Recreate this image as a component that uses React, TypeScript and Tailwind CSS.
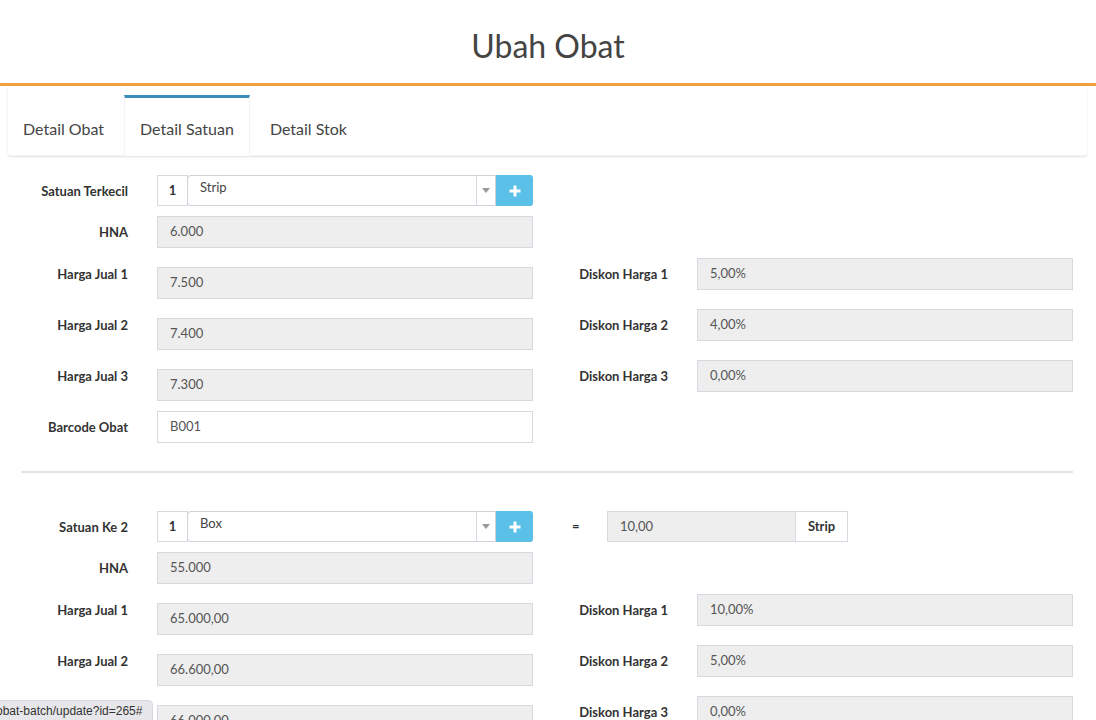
import React from 'react';

interface Baris {
  label: string;
  nilai: string;
  diskonLabel?: string;
  diskon?: string;
}

const fontUtama = "font-['Lato','Noto_Sans',sans-serif]";

function InputAbu({ nilai, lebar = 'w-[376px]' }: { nilai: string; lebar?: string }) {
  return (
    <div
      className={`${lebar} h-[32px] shrink-0 flex items-center pl-[12px] bg-[#eeeeee] border border-[#d6d9df] text-[13px] text-[#555]`}
    >
      {nilai}
    </div>
  );
}

function Label({ children, lebar = 'w-[128px]' }: { children: React.ReactNode; lebar?: string }) {
  return (
    <div className={`${lebar} h-[32px] shrink-0 flex items-center justify-end pt-[1px] text-[13px] font-bold text-[#333]`}>
      {children}
    </div>
  );
}

function GrupSatuan({ nama }: { nama: string }) {
  return (
    <div className="ml-[29px] w-[376px] h-[31px] flex shrink-0">
      <div className="w-[31px] h-full flex items-center justify-center border border-[#d6d9df] bg-white text-[13px] font-bold text-[#333]">
        1
      </div>
      <div className="flex-1 h-full flex border border-[#cfd2d8] rounded-l-[4px] bg-white -ml-px">
        <div className="flex-1 pl-[12px] pt-[2px] text-[13px] text-[#444]">{nama}</div>
        <div className="w-[19px] h-full border-l border-[#d6d9df] flex items-center justify-center">
          <svg width="8" height="5" viewBox="0 0 8 5">
            <path d="M0 0 L8 0 L4 5 Z" fill="#999" />
          </svg>
        </div>
      </div>
      <button className="w-[37px] h-full bg-[#5bc0e8] rounded-r-[3px] flex items-center justify-center">
        <svg width="12" height="12" viewBox="0 0 12 12">
          <path d="M6 0.5 V11.5 M0.5 6 H11.5" stroke="#fff" strokeWidth="3" />
        </svg>
      </button>
    </div>
  );
}

function BarisHarga({ baris }: { baris: Baris }) {
  return (
    <div className="flex h-[41px]">
      <div className="flex w-[533px] shrink-0">
        <Label>{baris.label}</Label>
        <div className="ml-[29px] mt-[9px]">
          <InputAbu nilai={baris.nilai} />
        </div>
      </div>
      {baris.diskonLabel && (
        <div className="flex">
          <Label lebar="w-[135px]">{baris.diskonLabel}</Label>
          <div className="ml-[29px]">
            <InputAbu nilai={baris.diskon || ''} />
          </div>
        </div>
      )}
    </div>
  );
}

function BagianSatuan({
  judul,
  nama,
  hna,
  harga,
  konversi,
  barcode,
}: {
  judul: string;
  nama: string;
  hna: string;
  harga: Baris[];
  konversi?: boolean;
  barcode?: string;
}) {
  return (
    <div className="flex flex-col gap-[10px]">
      <div className="flex h-[31px]">
        <div className="flex w-[533px] shrink-0">
          <div className="w-[128px] h-[31px] flex items-center justify-end pt-[2px] text-[13px] font-bold text-[#333]">
            {judul}
          </div>
          <GrupSatuan nama={nama} />
        </div>
        {konversi && (
          <div className="flex items-center">
            <span className="ml-[39px] w-[6px] text-[13px] font-bold text-[#333]">=</span>
            <div className="ml-[29px] flex h-[31px]">
              <div className="w-[189px] h-full flex items-center pl-[12px] bg-[#eeeeee] border border-[#d6d9df] text-[13px] text-[#555]">
                10,00
              </div>
              <div className="w-[52px] h-full flex justify-center pt-[5px] bg-white border border-l-0 border-[#d6d9df] text-[13px] font-bold text-[#333]">
                Strip
              </div>
            </div>
          </div>
        )}
      </div>
      <div className="flex">
        <Label>HNA</Label>
        <div className="ml-[29px]">
          <InputAbu nilai={hna} />
        </div>
      </div>
      {harga.map((b) => (
        <BarisHarga key={b.label} baris={b} />
      ))}
      {barcode && (
        <div className="flex">
          <Label>Barcode Obat</Label>
          <div className="ml-[29px] w-[376px] h-[32px] flex items-center pl-[12px] bg-white border border-[#d6d9df] text-[13px] text-[#555]">
            {barcode}
          </div>
        </div>
      )}
    </div>
  );
}

export default function App() {
  const tabs = ['Detail Obat', 'Detail Satuan', 'Detail Stok'];

  return (
    <div className={`min-h-screen bg-white ${fontUtama} relative`}>
      {/* judul halaman */}
      <div className="h-[83px] flex items-center justify-center pt-[8px]">
        <h1 className="text-[32px] text-[#444] font-normal">Ubah Obat</h1>
      </div>
      <div className="h-[3px] bg-[#eea03e]" />

      {/* tab */}
      <div className="ml-[8px] w-[1079px] h-[70px] bg-white rounded-b-[3px] shadow-[0_1px_2px_rgba(0,0,0,0.12)] flex items-end border-b border-[#f4f4f4]">
        {tabs.map((t) => {
          const aktif = t === 'Detail Satuan';
          return (
            <div
              key={t}
              className={`h-[61px] mr-[5px] px-[15px] pt-[3px] flex items-center border-t-[3px] text-[16px] text-[#444] -mb-px ${
                aktif ? 'border-t-[#3c8dbc] border-x border-x-[#f4f4f4] bg-white' : 'border-t-transparent'
              }`}
            >
              {t}
            </div>
          );
        })}
      </div>

      {/* isi form */}
      <div className="pt-[19px]">
        <BagianSatuan
          judul="Satuan Terkecil"
          nama="Strip"
          hna="6.000"
          barcode="B001"
          harga={[
            { label: 'Harga Jual 1', nilai: '7.500', diskonLabel: 'Diskon Harga 1', diskon: '5,00%' },
            { label: 'Harga Jual 2', nilai: '7.400', diskonLabel: 'Diskon Harga 2', diskon: '4,00%' },
            { label: 'Harga Jual 3', nilai: '7.300', diskonLabel: 'Diskon Harga 3', diskon: '0,00%' },
          ]}
        />

        <div className="ml-[21px] w-[1052px] mt-[28px] mb-[38px] border-t-2 border-[#e3e3e3]" />

        <BagianSatuan
          judul="Satuan Ke 2"
          nama="Box"
          hna="55.000"
          konversi
          harga={[
            { label: 'Harga Jual 1', nilai: '65.000,00', diskonLabel: 'Diskon Harga 1', diskon: '10,00%' },
            { label: 'Harga Jual 2', nilai: '66.600,00', diskonLabel: 'Diskon Harga 2', diskon: '5,00%' },
            { label: 'Harga Jual 3', nilai: '66.000,00', diskonLabel: 'Diskon Harga 3', diskon: '0,00%' },
          ]}
        />
      </div>

      {/* status bar browser */}
      <div className="fixed bottom-0 left-0 h-[20px] w-[153px] overflow-hidden bg-[#e7e7eb] rounded-tr-[5px] border-t border-r border-[#d8d8dc] flex items-center">
        <span className="-ml-[4px] whitespace-nowrap text-[12px] text-[#333] font-['Liberation_Sans',sans-serif]">
          obat-batch/update?id=265#
        </span>
      </div>
    </div>
  );
}
